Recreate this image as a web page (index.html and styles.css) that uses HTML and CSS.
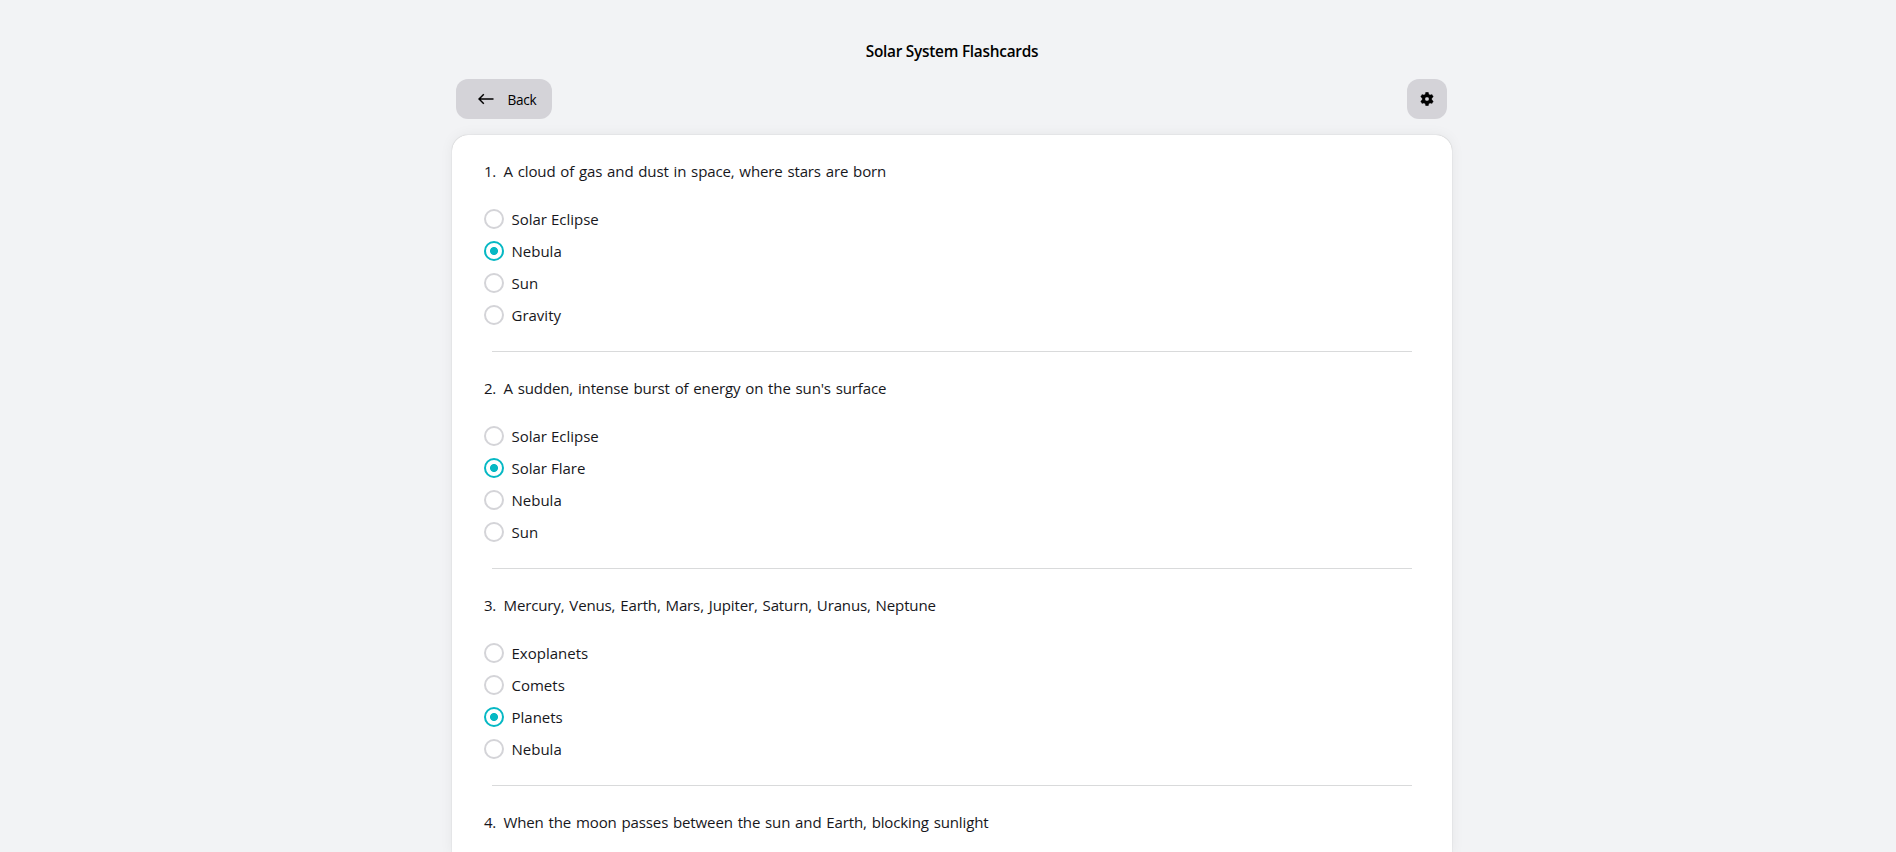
FILE: index.html
```
<!DOCTYPE html>
<html lang="en">
<head>
<meta charset="utf-8">
<title>Solar System Flashcards</title>
<link rel="stylesheet" href="styles.css">
</head>
<body>
<main class="page">
  <h1 class="title"><span>Solar System Flashcards</span></h1>
  <div class="toolbar">
    <button class="btn btn-back"><svg class="arrow" viewBox="0 0 16 12"><path d="M15.5 6H1M5.8 1.2L1 6l4.8 4.8"/></svg><span class="btn-label">Back</span></button>
    <button class="btn btn-settings" aria-label="Settings"><svg class="gear" viewBox="0 0 14 14"><path fill-rule="evenodd" d="M5.7 0.3h2.6l.5 2 1.2.7 2-.6 1.3 2.3-1.5 1.5v1.6l1.5 1.5-1.3 2.3-2-.6-1.2.7-.5 2H5.7l-.5-2-1.2-.7-2 .6L.7 9.300l1.500-1.500V6.200L.7 4.700 2 2.400l2 .6 1.200-.7zM7 4.900a2.100 2.100 0 1 0 0 4.200 2.100 2.100 0 0 0 0-4.200z"/></svg></button>
  </div>
  <div class="card">
    <section class="question">
      <p class="prompt"><span class="num">1.</span><span>A cloud of gas and dust in space, where stars are born</span></p>
      <ul class="options">
        <li class="option"><i class="radio"></i><span>Solar Eclipse</span></li>
        <li class="option"><i class="radio radio-on"></i><span>Nebula</span></li>
        <li class="option"><i class="radio"></i><span>Sun</span></li>
        <li class="option"><i class="radio"></i><span>Gravity</span></li>
      </ul>
    </section>
    <section class="question">
      <p class="prompt"><span class="num">2.</span><span>A sudden, intense burst of energy on the sun's surface</span></p>
      <ul class="options">
        <li class="option"><i class="radio"></i><span>Solar Eclipse</span></li>
        <li class="option"><i class="radio radio-on"></i><span>Solar Flare</span></li>
        <li class="option"><i class="radio"></i><span>Nebula</span></li>
        <li class="option"><i class="radio"></i><span>Sun</span></li>
      </ul>
    </section>
    <section class="question">
      <p class="prompt"><span class="num">3.</span><span>Mercury, Venus, Earth, Mars, Jupiter, Saturn, Uranus, Neptune</span></p>
      <ul class="options">
        <li class="option"><i class="radio"></i><span>Exoplanets</span></li>
        <li class="option"><i class="radio"></i><span>Comets</span></li>
        <li class="option"><i class="radio radio-on"></i><span>Planets</span></li>
        <li class="option"><i class="radio"></i><span>Nebula</span></li>
      </ul>
    </section>
    <section class="question">
      <p class="prompt"><span class="num">4.</span><span>When the moon passes between the sun and Earth, blocking sunlight</span></p>
    </section>
  </div>
</main>
</body>
</html>
```
FILE: styles.css
```
* { box-sizing: border-box; }
body {
  margin: 0;
  height: 852px;
  overflow: hidden;
  background: #f2f3f5;
  color: #17171c;
  font-family: "Segoe UI", "Open Sans", "Noto Sans", sans-serif;
  font-size: 15px;
  line-height: 24px;
}
.page {
  width: 1000px;
  height: 852px;
  margin-left: 452px;
  padding-top: 40px;
  display: flex;
  flex-direction: column;
}
.title {
  margin: 0 0 15px;
  text-align: center;
  font-size: 15.4px;
  font-weight: 600;
  letter-spacing: -0.26px;
  color: #000;
}
.toolbar {
  display: flex;
  justify-content: space-between;
  padding: 0 5px 0 4px;
  margin-bottom: 16px;
}
.btn {
  height: 40px;
  border: 0;
  border-radius: 12px;
  background: #d4d3d8;
  color: #000;
  font: inherit;
  display: flex;
  align-items: center;
}
.btn-back {
  width: 96px;
  padding: 0 0 0 22px;
  gap: 13.5px;
  font-size: 13.6px;
  letter-spacing: -0.25px;
}
.btn-label { padding-top: 1px; }
.btn-settings {
  width: 40px;
  padding: 0;
  justify-content: center;
}
.arrow {
  width: 16px;
  height: 12px;
  fill: none;
  stroke: #000;
  stroke-width: 1.5;
}
.gear {
  width: 14px;
  height: 14px;
  stroke: #000;
  stroke-width: 0.3;
  stroke-linejoin: round;
}
.card {
  flex: 1 0 auto;
  background: #fff;
  border-radius: 16px 16px 0 0;
  box-shadow: 0 0 1px rgba(0, 0, 0, 0.3), 0 0 14px rgba(0, 0, 0, 0.06);
}
.question { padding: 24px 32px 0; }
.prompt {
  margin: 0 0 20px;
  display: flex;
  word-spacing: 1.1px;
  letter-spacing: -0.15px;
  font-size: 15.05px;
}
.num {
  width: 19.5px;
  letter-spacing: -0.4px;
}
.options {
  margin: 0;
  padding: 0;
  list-style: none;
}
.option {
  height: 32px;
  display: flex;
  align-items: center;
  gap: 7.5px;
}
.radio {
  width: 20px;
  height: 20px;
  border: 2px solid #d4d4d8;
  border-radius: 50%;
}
.radio-on {
  border-color: #06b8c4;
  background: radial-gradient(circle, #06b8c4 3.6px, transparent 4.4px);
}
.options::after {
  content: "";
  display: block;
  height: 1px;
  margin: 20px 8px 0;
  background: #d9dadb;
}
```
